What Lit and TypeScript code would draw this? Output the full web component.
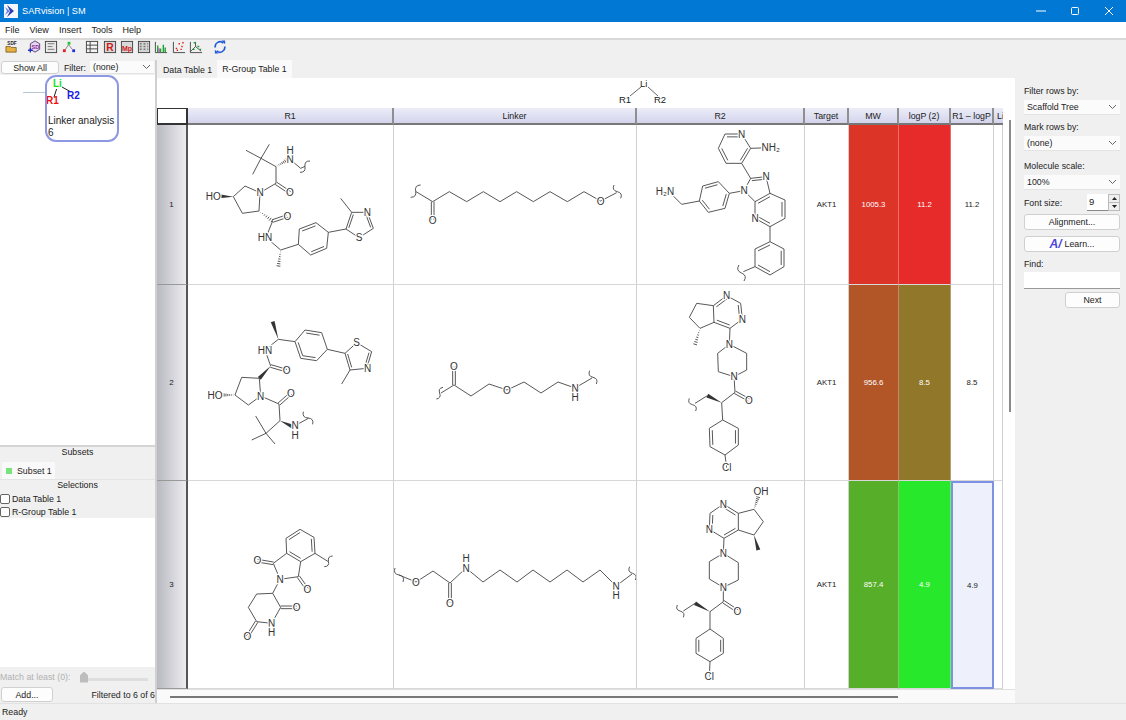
import { LitElement, html, css, svg } from 'lit';
import { customElement, state } from 'lit/decorators.js';

type Seg = number[];
interface Mol {
  crop: [number, number];
  bonds: Seg[];        // polylines
  dbl?: Seg[];         // C=O style, two parallel lines
  inner?: Seg[];       // x1 y1 x2 y2 cx cy, ring double bond
  wedge?: Seg[];
  hash?: Seg[];
  squig?: Seg[];
  labels: [number, number, string][];
}

const R1_1: Mol = {
  crop: [180, 125],
  bonds: [
    [198, 76, 243, 100, 268, 58], [243, 100, 218, 148], [243, 100, 288, 125, 288, 175, 240, 203, 195, 183, 160, 215, 187, 265, 237, 258, 240, 203],
    [330, 103, 362, 130, 375, 124], [278, 288, 258, 337, 302, 375, 355, 358, 358, 312, 408, 293, 445, 322, 440, 370, 392, 390, 355, 358],
    [445, 322, 498, 312, 515, 262, 562, 262, 580, 310, 537, 338, 498, 312], [515, 262, 482, 220],
  ],
  dbl: [[288, 175, 330, 203], [278, 288, 322, 273]],
  inner: [[358, 312, 408, 293, 400, 342], [440, 370, 392, 390, 400, 342], [498, 312, 515, 262, 540, 295], [562, 262, 580, 310, 540, 295]],
  wedge: [[160, 215, 118, 214]],
  hash: [[288, 125, 322, 105], [237, 258, 278, 288], [302, 375, 295, 425]],
  squig: [[360, 142, 390, 108]],
  labels: [[330, 103, 'N'], [330, 75, 'H'], [330, 203, 'O'], [240, 203, 'N'], [100, 214, 'HO'], [322, 273, 'O'], [255, 337, 'HN'], [562, 262, 'N'], [537, 338, 'S']],
};

const L_1: Mol = {
  crop: [390, 170],
  bonds: [[78, 65, 128, 95, 178, 65, 230, 95, 280, 65, 330, 95, 380, 65, 430, 95, 480, 65, 532, 95, 582, 65, 632, 93, 680, 68]],
  dbl: [[128, 95, 128, 150]],
  squig: [[62, 82, 92, 45], [672, 45, 692, 85]],
  labels: [[128, 150, 'O'], [632, 93, 'O']],
};

const R2_1: Mol = {
  crop: [640, 125],
  bonds: [
    [255, 27, 305, 27, 332, 70, 305, 115, 258, 115, 235, 70, 255, 27], [332, 70, 390, 68], [305, 115, 332, 160, 378, 155, 390, 205, 345, 230, 312, 197, 332, 160],
    [390, 205, 435, 225, 435, 280, 390, 305, 345, 280, 345, 230], [390, 305, 390, 350, 432, 372, 432, 425, 390, 450, 345, 425, 345, 372, 390, 350],
    [345, 425, 310, 440], [312, 197, 268, 205, 235, 170, 188, 183, 178, 228, 205, 262, 255, 250, 268, 205], [178, 228, 125, 238, 92, 205],
  ],
  inner: [
    [255, 27, 305, 27, 285, 70], [332, 70, 305, 115, 285, 70], [258, 115, 235, 70, 285, 70], [332, 160, 378, 155, 350, 195], [435, 225, 435, 280, 390, 255], [390, 305, 345, 280, 390, 255],
    [390, 205, 345, 230, 390, 255], [432, 372, 432, 425, 390, 400], [390, 450, 345, 425, 390, 400], [345, 372, 390, 350, 390, 400], [235, 170, 188, 183, 222, 216], [178, 228, 205, 262, 222, 216], [255, 250, 268, 205, 222, 216],
  ],
  squig: [[297, 420, 312, 468]],
  labels: [[305, 27, 'N'], [392, 68, 'NH₂'], [378, 155, 'N'], [312, 197, 'N'], [345, 280, 'N'], [75, 200, 'H₂N']],
};

const R1_2: Mol = {
  crop: [200, 290],
  bonds: [
    [235, 148, 285, 155, 315, 120, 365, 128, 382, 178, 350, 212, 302, 205, 285, 155], [382, 178, 435, 190, 470, 158, 515, 185, 500, 235, 450, 240, 435, 190], [450, 240, 425, 282],
    [235, 148, 195, 180, 212, 228], [178, 265, 125, 262, 105, 315, 145, 345, 182, 318, 178, 265], [182, 318, 237, 342, 240, 392, 198, 430, 155, 450], [198, 430, 167, 378], [198, 430, 225, 462],
    [285, 407, 325, 385],
  ],
  dbl: [[212, 228, 260, 242], [237, 342, 273, 310]],
  inner: [[315, 120, 365, 128, 333, 166], [350, 212, 302, 205, 333, 166], [285, 155, 302, 205, 333, 166], [435, 190, 450, 240, 475, 200], [515, 185, 500, 235, 475, 200]],
  wedge: [[235, 148, 218, 95], [212, 228, 178, 265], [240, 392, 278, 410]],
  hash: [[105, 315, 65, 315]],
  squig: [[310, 365, 338, 403]],
  labels: [[470, 158, 'S'], [503, 235, 'N'], [195, 180, 'HN'], [260, 242, 'O'], [182, 318, 'N'], [273, 310, 'O'], [45, 316, 'HO'], [285, 407, 'N'], [285, 435, 'H']],
};

const L_2: Mol = {
  crop: [393, 284],
  bonds: [[144, 327, 183, 303, 234, 336, 288, 300, 342, 318, 393, 294, 444, 327, 495, 294, 546, 312, 597, 282]],
  dbl: [[183, 303, 183, 246]],
  squig: [[130, 345, 150, 310], [590, 260, 610, 300]],
  labels: [[183, 246, 'O'], [342, 318, 'O'], [546, 312, 'N'], [546, 340, 'H']],
};

const R2_2: Mol = {
  crop: [650, 285],
  bonds: [
    [190, 62, 230, 32, 272, 55, 277, 102, 240, 130, 192, 112, 190, 62, 140, 55, 118, 97, 150, 130, 192, 112], [240, 130, 238, 178, 290, 205, 290, 255, 252, 275, 205, 260, 203, 205, 238, 178],
    [252, 275, 255, 322, 215, 353, 218, 405, 265, 430, 265, 480, 225, 510, 180, 485, 178, 430, 218, 405], [225, 510, 230, 548], [172, 332, 135, 355],
  ],
  dbl: [[255, 322, 297, 345]],
  inner: [[190, 62, 230, 32, 235, 80], [272, 55, 277, 102, 235, 80], [240, 130, 192, 112, 235, 80], [265, 430, 265, 480, 222, 458], [180, 485, 178, 430, 222, 458]],
  wedge: [[215, 353, 172, 332]],
  hash: [[150, 130, 135, 180]],
  squig: [[118, 340, 137, 378]],
  labels: [[230, 32, 'N'], [277, 102, 'N'], [238, 178, 'N'], [252, 275, 'N'], [297, 345, 'O'], [230, 548, 'Cl']],
};

const R1_3: Mol = {
  crop: [230, 520],
  bonds: [
    [168, 55, 210, 28, 252, 52, 255, 100, 212, 125, 170, 100, 168, 55], [170, 100, 130, 130, 150, 178, 205, 170, 212, 125], [150, 178, 128, 220, 152, 262, 125, 310, 80, 305, 55, 262, 80, 222, 128, 220],
    [255, 100, 295, 125],
  ],
  dbl: [[130, 130, 82, 122], [205, 170, 232, 208], [152, 262, 200, 262], [80, 305, 52, 350]],
  inner: [[168, 55, 210, 28, 212, 75], [252, 52, 255, 100, 212, 75], [212, 125, 170, 100, 212, 75]],
  squig: [[283, 140, 308, 108]],
  labels: [[82, 122, 'O'], [232, 208, 'O'], [150, 178, 'N'], [200, 262, 'O'], [125, 310, 'N'], [125, 338, 'H'], [52, 350, 'O']],
};

const L_3: Mol = {
  crop: [393, 480],
  bonds: [[18, 285, 69, 306, 120, 273, 171, 309, 219, 264, 270, 306, 321, 270, 372, 306, 420, 270, 471, 306, 522, 270, 570, 306, 621, 270, 669, 318, 717, 282]],
  dbl: [[171, 309, 171, 369]],
  squig: [[6, 264, 30, 306], [710, 260, 727, 300]],
  labels: [[69, 306, 'O'], [171, 369, 'O'], [219, 264, 'N'], [219, 236, 'H'], [669, 318, 'N'], [669, 346, 'H']],
};

const R2_3: Mol = {
  crop: [650, 480],
  bonds: [
    [265, 100, 220, 72, 180, 100, 178, 148, 222, 175, 265, 150, 265, 100, 312, 88, 340, 125, 312, 165, 265, 150], [222, 175, 220, 220, 265, 248, 265, 300, 220, 322, 178, 297, 178, 245, 220, 220],
    [220, 322, 220, 365, 180, 395, 180, 447, 220, 475, 220, 520, 180, 545, 138, 520, 138, 475, 180, 447], [180, 545, 178, 590], [135, 370, 100, 393],
  ],
  dbl: [[220, 365, 262, 393]],
  inner: [[265, 100, 220, 72, 222, 125], [180, 100, 178, 148, 222, 125], [222, 175, 265, 150, 222, 125], [220, 475, 220, 520, 180, 497], [138, 520, 138, 475, 180, 497]],
  wedge: [[312, 165, 325, 210], [180, 395, 135, 370]],
  hash: [[312, 88, 325, 50]],
  squig: [[82, 375, 100, 412]],
  labels: [[333, 35, 'OH'], [220, 72, 'N'], [178, 148, 'N'], [220, 220, 'N'], [220, 322, 'N'], [262, 393, 'O'], [178, 590, 'Cl']],
};

function molSvg(m: Mol, cx: number, cy: number, w: number, h: number) {
  const vb = `${(cx - m.crop[0]) * 3} ${(cy - m.crop[1]) * 3} ${w * 3} ${h * 3}`;
  const lines: string[] = m.bonds.map((b) => {
    let d = `M${b[0]} ${b[1]}`;
    for (let i = 2; i < b.length; i += 2) d += `L${b[i]} ${b[i + 1]}`;
    return d;
  });
  (m.dbl || []).forEach(([a, b, c, d]) => {
    const l = Math.hypot(c - a, d - b);
    const nx = ((d - b) / l) * 4, ny = (-(c - a) / l) * 4;
    lines.push(`M${a + nx} ${b + ny}L${c + nx} ${d + ny}M${a - nx} ${b - ny}L${c - nx} ${d - ny}`);
  });
  (m.inner || []).forEach(([a, b, c, d, ox, oy]) => {
    const t = 0.2;
    const sa = a + (ox - a) * t, sb = b + (oy - b) * t, ea = c + (ox - c) * t, eb = d + (oy - d) * t;
    lines.push(`M${sa} ${sb}L${ea} ${eb}`);
  });
  (m.hash || []).forEach(([a, b, c, d]) => {
    const l = Math.hypot(c - a, d - b);
    const ux = (c - a) / l, uy = (d - b) / l;
    for (let s = 0.12; s <= 1; s += 0.14) {
      const px = a + (c - a) * s, py = b + (d - b) * s, k = 6 * s;
      lines.push(`M${px - uy * k} ${py + ux * k}L${px + uy * k} ${py - ux * k}`);
    }
  });
  (m.squig || []).forEach(([a, b, c, d]) => {
    const mx = (a + c) / 2, my = (b + d) / 2;
    const nx = -(d - b) * 0.3, ny = (c - a) * 0.3;
    lines.push(`M${a} ${b}Q${(a + mx) / 2 + nx} ${(b + my) / 2 + ny} ${mx} ${my}Q${(c + mx) / 2 - nx} ${(d + my) / 2 - ny} ${c} ${d}`);
  });
  const polys = (m.wedge || []).map(([a, b, c, d]) => {
    const l = Math.hypot(c - a, d - b);
    const nx = ((d - b) / l) * 6, ny = (-(c - a) / l) * 6;
    return `${a},${b} ${c + nx},${d + ny} ${c - nx},${d - ny}`;
  });
  return html`<svg class="mol" width=${w} height=${h} viewBox=${vb}>
    <path d=${lines.join('')} fill="none" stroke="#4a4a4a" stroke-width="2.8"></path>
    ${polys.map((p) => svg`<polygon points=${p} fill="#333"></polygon>`)}
    ${m.labels.map(([x, y, t]) => svg`<text x=${x} y=${y} class="atom">${t}</text>`)}
  </svg>`;
}

const COLS = [31, 206, 243, 168, 44, 50, 52, 43, 9];
const ROWS = [
  { n: 1, y: 125, h: 160, r1: R1_1, l: L_1, r2: R2_1, mw: '1005.3', logp: '11.2', mwc: '#dd3428', lc: '#e72a2a' },
  { n: 2, y: 285, h: 196, r1: R1_2, l: L_2, r2: R2_2, mw: '956.6', logp: '8.5', mwc: '#b25628', lc: '#91772a' },
  { n: 3, y: 481, h: 208, r1: R1_3, l: L_3, r2: R2_3, mw: '857.4', logp: '4.9', mwc: '#57ae28', lc: '#27e82b' },
];

const chevron = html`<svg class="chev" width="9" height="6" viewBox="0 0 9 6"><path d="M1 1l3.500 3.500L8 1" fill="none" stroke="#666"></path></svg>`;

@customElement('app-root')
export class AppRoot extends LitElement {
  static styles = css`
    :host {
      display: flex;
      flex-direction: column;
      width: 1126px;
      height: 720px;
      overflow: hidden;
      background: #f0f0f0;
      font-family: "Liberation Sans", sans-serif;
      font-size: 8.8px;
      color: #222;
    }
    .titlebar {
      height: 22px;
      background: #0078d4;
      color: #fff;
      display: flex;
      align-items: center;
      padding-left: 4px;
      font-size: 9.2px;
      flex: none;
    }
    .titlebar .name { margin-left: 4px; flex: 1; }
    .winbtns { display: flex; }
    .winbtns svg { width: 34px; height: 22px; display: block; }
    .menubar {
      height: 16px;
      background: #fff;
      display: flex;
      align-items: center;
      gap: 10px;
      padding-left: 5px;
      border-bottom: 2px solid #d9d9d9;
      flex: none;
      font-size: 9px;
    }
    .toolbar {
      height: 20px;
      flex: none;
      display: flex;
      align-items: center;
      padding: 0 0 6px 5px;
      box-sizing: border-box;
    }
    .toolbar svg { display: block; width: 14px; height: 14px; margin-right: 3px; flex: none; }
    .toolbar .g0 { margin-left: -1px; }
    .toolbar .g1 { margin-left: 1px; }
    .toolbar .g6 { margin-left: 6px; }
    .toolbar .g7 { margin-left: 7px; }
    .main { flex: 1; display: flex; min-height: 0; }

    .left {
      width: 155px;
      flex: none;
      display: flex;
      flex-direction: column;
    }
    .filterbar { height: 15px; display: flex; align-items: center; padding-left: 1px; flex: none; }
    .btn {
      background: #fdfdfd;
      border: 1px solid #d0d0d0;
      border-radius: 3px;
      display: flex;
      align-items: center;
      justify-content: center;
      box-sizing: border-box;
    }
    .showall { width: 58px; height: 13px; }
    .filterbar .lbl { margin-left: 5px; width: 26px; }
    .select {
      background: #fbfbfb;
      display: flex;
      align-items: center;
      justify-content: space-between;
      padding: 0 3px;
      box-sizing: border-box;
      border-bottom: 1px solid #e4e4e4;
    }
    .filterbar .select { width: 64px; height: 13px; }
    .tree { height: 370px; background: #fff; position: relative; flex: none; }
    .tree .edge { position: absolute; left: 23px; top: 17px; width: 22px; height: 1px; background: #b9c6d8; }
    .node {
      position: absolute;
      left: 45px;
      top: 0;
      width: 74px;
      height: 67px;
      box-sizing: border-box;
      border: 2px solid #8d97e2;
      border-radius: 11px;
      background: #fff;
      font-size: 10px;
      line-height: 12px;
    }
    .node svg { display: block; position: absolute; left: 0; top: 0; }
    .node .cap { position: absolute; left: 1px; top: 38px; }
    .sets { flex: 1; display: flex; flex-direction: column; min-height: 0; }
    .sethead { text-align: center; height: 10px; line-height: 10px; }
    .subsets { border-top: 2px solid #d4d4d4; height: 34px; box-sizing: border-box; flex: none; }
    .subtab {
      margin: 5px 0 0 2px;
      width: 53px;
      height: 17px;
      background: #f9f9f9;
      display: flex;
      align-items: center;
      padding-left: 4px;
      box-sizing: border-box;
      gap: 5px;
    }
    .subtab i { width: 6px; height: 6px; background: #76e47a; display: block; }
    .selections { flex: none; border-top: 1px solid #e4e4e4; }
    .selections .sethead { margin-bottom: 2px; }
    .check { height: 13px; display: flex; align-items: center; gap: 2px; background: #f0f0f0; }
    .check b { width: 8px; height: 8px; border: 1px solid #666; border-radius: 2px; background: #fff; display: block; }
    .whitefill { flex: 1; background: #fff; }
    .match { height: 19px; display: flex; align-items: center; color: #b0b0b0; flex: none; }
    .match span { width: 80px; white-space: nowrap; flex: none; }
    .slider { width: 68px; height: 12px; position: relative; }
    .slider u { position: absolute; left: 5px; right: 0; top: 7px; height: 3px; background: #dcdfdc; }
    .slider s { position: absolute; left: 0; top: 1px; width: 8px; height: 11px; background: #bdbdbd; clip-path: polygon(50% 0, 100% 35%, 100% 100%, 0 100%, 0 35%); }
    .addrow { height: 17px; display: flex; align-items: center; justify-content: space-between; padding: 0 0 0 1px; flex: none; }
    .add { width: 52px; height: 15px; }

    .center {
      flex: 1;
      min-width: 0;
      display: flex;
      flex-direction: column;
      border-left: 2px solid #d0d0d0;
    }
    .tabs { height: 18px; display: flex; align-items: flex-start; flex: none; padding-left: 2px; }
    .tab { height: 17px; margin-top: 1px; padding: 0 4px; display: flex; align-items: center; box-sizing: border-box; margin-right: 1px; }
    .tab.on { background: #fafafa; height: 18px; margin-top: 0; padding: 0 5px; }
    .scaffold { height: 30px; background: #fff; flex: none; position: relative; }
    .scaffold svg { position: absolute; left: 450px; top: 0; }
    .tablewrap { display: flex; flex: none; background: #fff; }
    .grid { display: grid; width: 846px; overflow: hidden; flex: none; }
    .hd {
      height: 17px;
      box-sizing: border-box;
      background: linear-gradient(#ecedf8, #d3d4ec);
      border-right: 2px solid #8f8f8f;
      border-bottom: 2px solid #777;
      display: flex;
      align-items: center;
      justify-content: center;
      white-space: nowrap;
      overflow: hidden;
    }
    .hd.corner { background: #fff; border: 1px solid #333; border-bottom-width: 2px; border-right-width: 2px; }
    .hd.cut { justify-content: flex-start; padding-left: 3px; border-right: 0; }
    .rowhd {
      background: linear-gradient(90deg, #b9b9c1, #ececf0);
      border-right: 2px solid #555;
      border-bottom: 1px solid #999;
      display: flex;
      align-items: center;
      justify-content: center;
      box-sizing: border-box;
      font-size: 8px;
    }
    .cell {
      box-sizing: border-box;
      border-right: 1px solid #d0d0d0;
      border-bottom: 1px solid #d8d8d8;
      display: flex;
      align-items: center;
      justify-content: center;
      overflow: hidden;
      position: relative;
      font-size: 7.8px;
    }
    .cell.heat { color: #fff; border-right: 1px solid rgba(255, 255, 255, 0.3); }
    .cell.sel { border: 2px solid #7d92e4; background: #eef1fb; }
    .mol { display: block; flex: none; position: absolute; left: 0; top: 0; }
    .atom {
      font-family: "Liberation Sans", sans-serif;
      font-size: 30px;
      fill: #333;
      text-anchor: middle;
      dominant-baseline: central;
      paint-order: stroke;
      stroke: #fff;
      stroke-width: 7px;
    }
    .vscroll { flex: 1; background: #fff; display: flex; justify-content: center; }
    .vscroll i { display: block; width: 2px; height: 292px; margin: 12px 0 0 1px; background: #8a8a8a; }
    .hscroll { flex: 1; background: #fafafa; display: flex; align-items: flex-start; padding: 6px 0 0 13px; border-top: 1px solid #e0e0e0; }
    .hscroll i { display: block; width: 728px; height: 2px; background: #777; }

    .right {
      width: 111px;
      flex: none;
      padding: 25px 6px 0 9px;
      box-sizing: border-box;
      display: flex;
      flex-direction: column;
    }
    .right label { display: block; height: 12px; line-height: 12px; }
    .right .select { height: 15px; margin-top: 3px; }
    .mt6 { margin-top: 6px; }
    .mt9 { margin-top: 9px; }
    .fontrow { display: flex; align-items: center; margin-top: 4px; height: 17px; }
    .fontrow label { width: 63px; }
    .spin { width: 21px; height: 17px; background: #fff; border-bottom: 1px solid #888; box-sizing: border-box; padding-left: 2px; line-height: 15px; font-size: 9.500px; }
    .spinbtns { width: 12px; height: 17px; display: flex; flex-direction: column; gap: 1px; background: #bbb; padding: 1px; box-sizing: border-box; }
    .spinbtns span { flex: 1; background: #efefef; display: flex; align-items: center; justify-content: center; }
    .right .btn { height: 16px; flex: none; }
    .align { margin-top: 3px; }
    .learn { margin-top: 6px; gap: 3px; }
    .learn em { font: italic bold 12px "Liberation Sans", sans-serif; color: #4a45e0; line-height: 12px; }
    .find { margin-top: 2px; height: 17px; background: #fff; border-bottom: 1px solid #999; box-sizing: border-box; flex: none; }
    .next { width: 55px; margin: 3px 0 0 auto; }

    .status { height: 17px; flex: none; display: flex; align-items: center; padding-left: 2px; border-top: 1px solid #e2e2e2; box-sizing: border-box; }
  `;

  @state() rows = ROWS;

  renderToolbar() {
    const pane = (fill: string, inner: unknown) => svg`<rect x="1.500" y="1.500" width="12" height="12" fill=${fill} stroke="#444"></rect>${inner}`;
    const gridLines = svg`<path d="M1.500 5.500h12M1.500 9.500h12M5.500 1.500v12" stroke="#444" fill="none"></path>`;
    return html`<div class="toolbar">
      <svg viewBox="0 0 15 15"><text x="7.500" y="5" font-size="5" font-family="Liberation Sans" font-weight="700" text-anchor="middle" fill="#222">SDF</text><path d="M1 7h5l1 1h5v5H1z" fill="#e8b040" stroke="#5a4410" stroke-width=".7"></path></svg>
      <svg class="g6" viewBox="0 0 15 15"><path d="M7.500 1l5 3v6l-5 3-5-3V4z" fill="#e4d8ee" stroke="#5b3d78"></path><text x="8" y="10" font-size="6" font-family="Liberation Sans" font-weight="700" text-anchor="middle" fill="#8a2a9a">SD</text><path d="M0 11h5M2.500 8.500v5" stroke="#2030c0" stroke-width="1.400"></path></svg>
      <svg class="g0" viewBox="0 0 15 15">${pane('#e8e8e8', svg`<path d="M4 4h7M4 7h5M4 10h7" stroke="#777"></path>`)}</svg>
      <svg class="g1" viewBox="0 0 15 15"><path d="M3 11l4-6 4 5" fill="none" stroke="#555" stroke-width=".7"></path><rect x="1" y="10" width="3" height="3" fill="#e02020"></rect><rect x="6" y="2" width="3" height="3" fill="#20c030"></rect><rect x="11" y="10" width="3" height="3" fill="#2030e0"></rect></svg>
      <svg class="g6" viewBox="0 0 15 15">${pane('#f4f4f4', gridLines)}</svg>
      <svg class="g1" viewBox="0 0 15 15">${pane('#d8d8d8', svg`<text x="7.500" y="12" font-size="11" font-weight="700" font-family="Liberation Sans" text-anchor="middle" fill="#d01818">R</text>`)}</svg>
      <svg viewBox="0 0 15 15">${pane('#d8d8d8', svg`<text x="7.500" y="11.500" font-size="7.500" font-weight="700" font-family="Liberation Sans" text-anchor="middle" fill="#d01818">Mp</text>`)}</svg>
      <svg viewBox="0 0 15 15">${pane('#d4d4d4', svg`<path d="M3 4h2M7 4h2M11 4h1M3 7h2M7 7h2M11 7h1M3 10h2M7 10h2M11 10h1" stroke="#777" stroke-width="1.600"></path>`)}</svg>
      <svg viewBox="0 0 15 15"><path d="M1.500 2v11.500H14" stroke="#444" fill="none"></path><path d="M4 13V6M7 13V9M10 13V5M12 13V8" stroke-width="1.500" fill="none" stroke="#20a030"></path><path d="M5.500 13V9" stroke="#a020b0"></path></svg>
      <svg class="g1" viewBox="0 0 15 15"><path d="M1.500 2v11.500H14" stroke="#444" fill="none"></path><path d="M4 9h1.500M7 4h1.500M10 7h1.500M5 11h1.500M11 3h1.500M9 10h1.500" stroke="#e01818" stroke-width="1.500"></path></svg>
      <svg viewBox="0 0 15 15"><path d="M1.500 2v11.500H14M2 12l5-5 6 5M7 7V2" stroke="#222" fill="none" stroke-width=".8"></path><path d="M5 3h2M9 7h2M4 10h2M11 10h2" stroke="#18a030" stroke-width="1.500"></path></svg>
      <svg class="g7" viewBox="0 0 15 15"><path d="M2.500 8A5 5 0 0 1 11 3.500M12.500 7A5 5 0 0 1 4 11.500" fill="none" stroke="#1f58d8" stroke-width="1.800"></path><path d="M9 .5h4v4zM6 14.500H2v-4z" fill="#1f58d8"></path></svg>
    </div>`;
  }

  renderTable() {
    const heads = ['', 'R1', 'Linker', 'R2', 'Target', 'MW', 'logP (2)', 'R1 – logP', 'Li'];
    const colX = COLS.reduce<number[]>((a, w, i) => [...a, i ? a[i - 1] + COLS[i - 1] : 157], []);
    const template = COLS.map((c) => `${c}px`).join(' ');
    return html`<div class="grid" style="grid-template-columns:${template}">
      ${heads.map((h, i) => html`<div class="hd ${i === 0 ? 'corner' : ''} ${i === 8 ? 'cut' : ''}">${h}</div>`)}
      ${this.rows.map((r, i) => html`
        <div class="rowhd" style="height:${r.h}px">${r.n}</div>
        <div class="cell">${molSvg(r.r1, colX[1], r.y, COLS[1], r.h)}</div>
        <div class="cell">${molSvg(r.l, colX[2], r.y, COLS[2], r.h)}</div>
        <div class="cell">${molSvg(r.r2, colX[3], r.y, COLS[3], r.h)}</div>
        <div class="cell">AKT1</div>
        <div class="cell heat" style="background:${r.mwc}">${r.mw}</div>
        <div class="cell heat" style="background:${r.lc}">${r.logp}</div>
        <div class="cell ${i === 2 ? 'sel' : ''}">${r.logp}</div>
        <div class="cell"></div>
      `)}
    </div>`;
  }

  render() {
    return html`
      <div class="titlebar">
        <svg width="14" height="14" viewBox="0 0 14 14"><rect width="14" height="14" fill="#f4f6fb"></rect><path d="M3 1l7 6-7 6 3-6z" fill="#2b3fae"></path><path d="M1 3l5 4-5 4 2-4z" fill="#6f86e8"></path></svg>
        <span class="name">SARvision | SM</span>
        <div class="winbtns">
          <svg viewBox="0 0 34 22"><path d="M12 11h10" stroke="#fff"></path></svg>
          <svg viewBox="0 0 34 22"><rect x="13.500" y="7.500" width="7" height="7" rx="1" fill="none" stroke="#fff"></rect></svg>
          <svg viewBox="0 0 34 22"><path d="M13 7l8 8M21 7l-8 8" stroke="#fff"></path></svg>
        </div>
      </div>
      <div class="menubar"><span>File</span><span>View</span><span>Insert</span><span>Tools</span><span>Help</span></div>
      ${this.renderToolbar()}
      <div class="main">
        <div class="left">
          <div class="filterbar">
            <div class="btn showall">Show All</div>
            <span class="lbl">Filter:</span>
            <div class="select"><span>(none)</span>${chevron}</div>
          </div>
          <div class="tree">
            <div class="edge"></div>
            <div class="node">
              <svg width="70" height="36" viewBox="0 0 70 36">
                <path d="M9.600 12L7 20M15 10l9 5" stroke="#222" fill="none"></path>
                <text x="6" y="10" font-size="10" font-weight="700" font-family="Liberation Sans" fill="#22e022">Li</text>
                <text x="-1" y="27" font-size="10" font-weight="700" font-family="Liberation Sans" fill="#f01010">R1</text>
                <text x="20" y="22" font-size="10" font-weight="700" font-family="Liberation Sans" fill="#1818e8">R2</text>
              </svg>
              <div class="cap">Linker analysis<br />6</div>
            </div>
          </div>
          <div class="sets">
            <div class="subsets">
              <div class="sethead">Subsets</div>
              <div class="subtab"><i></i>Subset 1</div>
            </div>
            <div class="selections">
              <div class="sethead">Selections</div>
              <div class="check"><b></b>Data Table 1</div>
              <div class="check"><b></b>R-Group Table 1</div>
            </div>
            <div class="whitefill"></div>
            <div class="match"><span>Match at least (0):</span><div class="slider"><u></u><s></s></div></div>
            <div class="addrow"><div class="btn add">Add...</div><span>Filtered to 6 of 6</span></div>
          </div>
        </div>
        <div class="center">
          <div class="tabs"><div class="tab">Data Table 1</div><div class="tab on">R-Group Table 1</div></div>
          <div class="scaffold">
            <svg width="70" height="29" viewBox="0 0 70 29" font-family="Liberation Sans" font-size="9.500" fill="#222">
              <path d="M34 9L23 18M41 9l10 9" stroke="#666" fill="none"></path>
              <text x="33" y="9">Li</text><text x="12" y="25">R1</text><text x="47" y="25">R2</text>
            </svg>
          </div>
          <div class="tablewrap">
            ${this.renderTable()}
            <div class="vscroll"><i></i></div>
          </div>
          <div class="hscroll"><i></i></div>
        </div>
        <div class="right">
          <label>Filter rows by:</label>
          <div class="select"><span>Scaffold Tree</span>${chevron}</div>
          <label class="mt6">Mark rows by:</label>
          <div class="select"><span>(none)</span>${chevron}</div>
          <label class="mt9">Molecule scale:</label>
          <div class="select"><span>100%</span>${chevron}</div>
          <div class="fontrow">
            <label>Font size:</label>
            <div class="spin">9</div>
            <div class="spinbtns">
              <span><svg width="5" height="3" viewBox="0 0 5 3"><path d="M2.500 0L5 3H0z" fill="#222"></path></svg></span>
              <span><svg width="5" height="3" viewBox="0 0 5 3"><path d="M2.500 3L5 0H0z" fill="#222"></path></svg></span>
            </div>
          </div>
          <div class="btn align">Alignment...</div>
          <div class="btn learn"><em>A/</em>Learn...</div>
          <label class="mt6">Find:</label>
          <div class="find"></div>
          <div class="btn next">Next</div>
        </div>
      </div>
      <div class="status">Ready</div>
    `;
  }
}
